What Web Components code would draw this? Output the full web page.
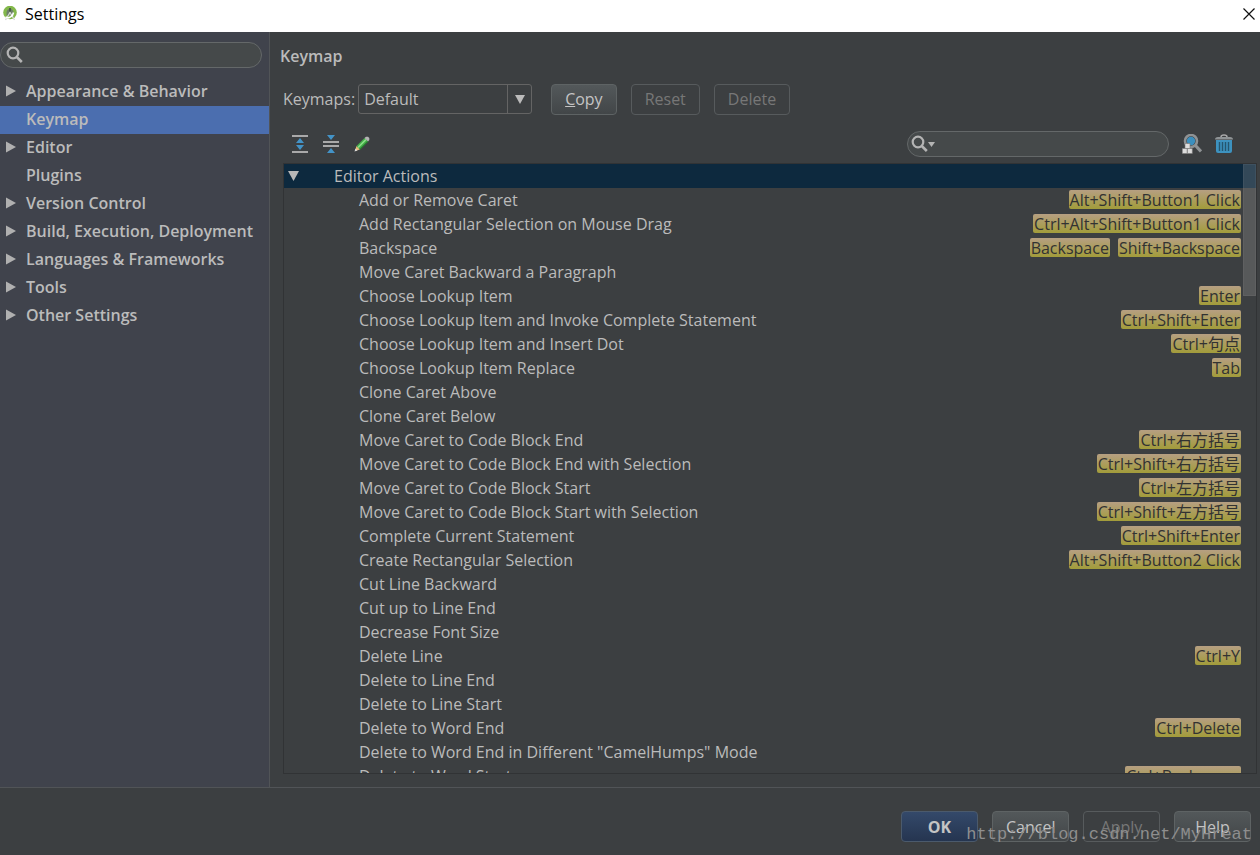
<!DOCTYPE html>
<html lang="en">
<head>
<meta charset="utf-8">
<title>Settings</title>
<style>
  html, body { margin: 0; height: 100%; }
  body { font-family: "Open Sans", "Noto Sans CJK SC", sans-serif; font-size: 16px; line-height: 24px; color: #bbbbbb; background: #3c3f41; }
</style>
</head>
<body>
<settings-window></settings-window>

<template id="tpl-window">
  <style>
    :host { display: flex; flex-direction: column; height: 100vh; overflow: hidden; }
    main { flex: 1; min-height: 0; display: flex; }
    settings-sidebar { flex: none; width: 269px; }
    keymap-page { flex: 1; min-width: 0; }
  </style>
  <title-bar>Settings</title-bar>
  <main>
    <settings-sidebar></settings-sidebar>
    <keymap-page></keymap-page>
  </main>
  <dialog-footer>http://blog.csdn.net/MyHreat</dialog-footer>
</template>

<template id="tpl-title">
  <style>
    :host { display: flex; align-items: center; height: 32px; flex: none; box-sizing: border-box; padding: 0 4px 4px 2px; background: #fff; color: #000; }
    span { flex: 1; margin-left: 7px; }
    button { border: 0; background: none; padding: 0; width: 14px; height: 14px; display: flex; }
    svg { display: block; }
  </style>
  <svg width="16" height="16" viewBox="0 0 16 16" aria-hidden="true">
    <circle cx="8" cy="6.500" r="6.800" fill="#83b84a"/>
    <path d="M4.500 7a3.500 4 0 0 1 7 0v2.500h-7z" fill="#6d8069"/>
    <path d="M8 2v4" stroke="#4b5f45" stroke-width="2"/>
    <path d="M3.500 14L8 6.500l4.500 7.500" stroke="#d5d8d5" stroke-width="1.300" fill="none"/>
    <path d="M3.500 11q3 2 5.500-.5 2-1 2.500-4" stroke="#fff" stroke-width="1.600" fill="none"/>
  </svg>
  <span><slot></slot></span>
  <button aria-label="Close"><svg width="14" height="14" viewBox="0 0 14 14"><path d="M1.500 1.500l11 11M12.500 1.500l-11 11" stroke="#111" stroke-width="1.200"/></svg></button>
</template>

<template id="tpl-search">
  <style>
    :host { display: flex; align-items: center; box-sizing: border-box; width: 262px; height: 26px; border: 1px solid #646869; border-radius: 13px; background: #45494a; padding: 0 8px 0 5px; }
    svg { flex: none; display: block; }
    .menu { display: none; }
    :host([menu]) { padding-left: 3px; }
    :host([menu]) .menu { display: block; }
    input { flex: 1; min-width: 0; border: 0; outline: 0; background: none; color: inherit; font: inherit; padding: 0 4px; height: 22px; }
  </style>
  <svg width="17" height="18" viewBox="0 0 17 18" aria-hidden="true"><circle cx="7" cy="7" r="5.300" fill="none" stroke="#b4b4b4" stroke-width="2.200"/><path d="M10.800 11l5 5" stroke="#b4b4b4" stroke-width="2.600"/></svg>
  <svg class="menu" width="7" height="5" viewBox="0 0 7 5" aria-hidden="true"><path d="M0 0h7L3.500 5z" fill="#b4b4b4"/></svg>
  <input type="text">
</template>

<template id="tpl-sidebar">
  <style>
    :host { display: block; background: #40434c; border-right: 1px solid #515457; padding-top: 10px; }
    nav { margin-top: 10px; }
  </style>
  <search-box label="Search settings"></search-box>
  <nav>
    <nav-item branch>Appearance &amp; Behavior</nav-item>
    <nav-item selected>Keymap</nav-item>
    <nav-item branch>Editor</nav-item>
    <nav-item>Plugins</nav-item>
    <nav-item branch>Version Control</nav-item>
    <nav-item branch>Build, Execution, Deployment</nav-item>
    <nav-item branch>Languages &amp; Frameworks</nav-item>
    <nav-item branch>Tools</nav-item>
    <nav-item branch>Other Settings</nav-item>
  </nav>
</template>

<template id="tpl-nav">
  <style>
    :host { display: block; }
    a { display: flex; align-items: center; box-sizing: border-box; height: 28px; padding: 0 0 2px 6px; color: #bbbbbb; text-decoration: none; font-weight: 600; white-space: nowrap; }
    :host([selected]) a { background: #4b6eaf; }
    svg { flex: none; margin-right: 10px; visibility: hidden; }
    :host([branch]) svg { visibility: visible; }
  </style>
  <a href="#"><svg width="10" height="12" viewBox="0 0 10 12" aria-hidden="true"><path d="M0 .5L10 6 0 11.500z" fill="#b0b0b0"/></svg><slot></slot></a>
</template>

<template id="tpl-button">
  <style>
    :host { display: block; flex: none; }
    button { display: block; box-sizing: border-box; width: 100%; height: 31px; padding: 0 13px; border: 1px solid #5e6364; border-radius: 4px; background: linear-gradient(#53585a, #424648); color: #c4c4c4; font: inherit; line-height: 24px; white-space: nowrap; }
    button:disabled { background: none; color: #777777; border-color: #575b5d; }
    :host([primary]) button { background: linear-gradient(#34496a, #253550); border-color: #4b5a6c; font-weight: 700; }
  </style>
  <button><slot></slot></button>
</template>

<template id="tpl-page">
  <style>
    :host { display: flex; flex-direction: column; box-sizing: border-box; padding: 12px 3px 13px 10px; }
    h1 { margin: 0; font-size: 16px; line-height: 24px; font-weight: 600; }
    .row { display: flex; align-items: center; height: 32px; margin: 15px 0 0 3px; }
    .select { position: relative; width: 174px; height: 30px; margin: 0 19px 0 3px; }
    select { appearance: none; box-sizing: border-box; width: 100%; height: 30px; border: 1px solid #646464; border-radius: 3px; background: #3c3f41; color: #bbbbbb; font: inherit; padding: 0 30px 0 5px; outline: 0; }
    .arrow { position: absolute; right: 1px; top: 1px; width: 23px; height: 28px; border-left: 1px solid #646464; display: grid; place-items: center; pointer-events: none; }
    ui-button + ui-button { margin-left: 14px; }
    .tools { display: flex; align-items: center; height: 32px; margin: 13px 24px 3px 12px; gap: 13px; }
    .tools button { border: 0; background: none; padding: 0; display: flex; }
    .tools button + button { margin-left: 2px; }
    .tools search-box { margin-left: auto; }
    .tools search-box + button + button { margin-left: 0; }
    keymap-tree { flex: 1; min-height: 0; margin-left: 3px; }
  </style>
  <h1>Keymap</h1>
  <div class="row">
    <label for="scheme">Keymaps:</label>
    <div class="select">
      <select id="scheme"><option>Default</option></select>
      <span class="arrow"><svg width="10" height="9" viewBox="0 0 10 9"><path d="M0 0h10L5 9z" fill="#bbb"/></svg></span>
    </div>
    <ui-button><u>C</u>opy</ui-button>
    <ui-button disabled>Reset</ui-button>
    <ui-button disabled>Delete</ui-button>
  </div>
  <div class="tools">
    <button aria-label="Expand all"><svg width="16" height="18" viewBox="0 0 16 18"><path d="M0 1h16M0 17h16" stroke="#a9a9a9" stroke-width="2"/><path d="M4 8l4-5 4 5zM4 10l4 5 4-5z" fill="#4393c7"/></svg></button>
    <button aria-label="Collapse all"><svg width="16" height="18" viewBox="0 0 16 18"><path d="M0 7h16M0 11h16" stroke="#a9a9a9" stroke-width="2"/><path d="M4 0h8L8 5zM4 18h8l-4-5z" fill="#4393c7"/></svg></button>
    <button aria-label="Edit shortcut"><svg width="16" height="16" viewBox="0 0 16 16"><path d="M1 15l1.500-5 3.500 3.500z" fill="#e8bd7a"/><path d="M.5 15.500l1-3 2 2z" fill="#ddd"/><path d="M2.500 10l8-8 3.500 3.500-8 8z" fill="#46ad4b"/><path d="M3.500 11l8-8 1 1-8 8z" fill="#8ee28b"/><path d="M5.500 13l8-8 .8.800-8.300 8z" fill="#247d2c"/><path d="M10.500 2L12 .7h2L15.300 2v2L14 5.500z" fill="#b4b4b4"/></svg></button>
    <search-box menu label="Search actions"></search-box>
    <button aria-label="Find action by shortcut"><svg width="20" height="20" viewBox="0 0 20 20"><circle cx="9" cy="7" r="6" fill="none" stroke="#8f9294" stroke-width="2.600"/><circle cx="9" cy="7" r="4.200" fill="#3b8fbe"/><path d="M13 11l6 6.500" stroke="#8f9294" stroke-width="3.200"/><path d="M3 9.500h5v5H3z" fill="#dcdcdc" stroke="#777" stroke-width=".6"/><path d="M.3 14.500h5v5h-5zM5.300 14.500h5v5h-5z" fill="#dcdcdc" stroke="#777" stroke-width=".6"/></svg></button>
    <button aria-label="Clear"><svg width="18" height="20" viewBox="0 0 18 20"><path d="M6 3q0-2 3-2t3 2" fill="none" stroke="#a9a9a9" stroke-width="1.500"/><path d="M0 5.500q0-2.500 3-2.500h12q3 0 3 2.500z" fill="#8f9496"/><path d="M1 6h16v11q0 2-2 2H3q-2 0-2-2z" fill="#3d92bf"/><path d="M4.500 8v9M7.500 8v9M10.500 8v9M13.500 8v9" stroke="#25566f" stroke-width="1.400"/></svg></button>
  </div>
  <keymap-tree></keymap-tree>
</template>

<template id="tpl-tree">
  <style>
    :host { display: block; position: relative; border: 1px solid #313335; }
    .view { height: 100%; overflow: auto; scrollbar-width: none; }
    table { width: 100%; border-collapse: collapse; }
    tr { height: 24px; }
    th, td { padding: 0; height: 24px; line-height: 24px; font-weight: 400; text-align: left; white-space: nowrap; }
    tbody th { padding-left: 75px; }
    thead th { background: #0d293e; }
    thead div { display: flex; align-items: center; gap: 35px; padding-left: 4px; }
    td { padding-right: 15px; }
    td div { display: flex; justify-content: flex-end; gap: 8px; box-sizing: border-box; height: 24px; padding-top: 2px; align-items: flex-start; }
    kbd { font: inherit; line-height: 20px; height: 19px; padding: 0 1px; border-radius: 2px; color: #323232; background: linear-gradient(#b69f82, #a29c3a); }
    .thumb { position: absolute; top: 0; right: 0; box-sizing: border-box; width: 13px; height: 132px; background: rgba(166,166,166,.25); border: 1px solid rgba(166,166,166,.1); }
  </style>
  <div class="view"><table>
    <thead><tr><th colspan="2" scope="colgroup"><div><svg width="11" height="10" viewBox="0 0 11 10" aria-hidden="true"><path d="M0 0h11L5.500 10z" fill="#b8b8b8"/></svg>Editor Actions</div></th></tr></thead>
    <tbody></tbody>
  </table></div>
  <div class="thumb"></div>
</template>

<template id="tpl-footer">
  <style>
    :host { display: flex; flex: none; position: relative; justify-content: flex-end; gap: 14px; height: 67px; box-sizing: content-box; border-top: 1px solid #515457; padding-right: 9px; }
    ui-button { width: 77px; margin-top: 23px; }
    .mark { position: absolute; right: 8px; bottom: 8px; font: 17px/24px "Liberation Mono", monospace; color: #8e8e8e; pointer-events: none; }
  </style>
  <ui-button primary>OK</ui-button>
  <ui-button>Cancel</ui-button>
  <ui-button disabled>Apply</ui-button>
  <ui-button>Help</ui-button>
  <span class="mark"><slot></slot></span>
</template>

<script>
  class BaseElement extends HTMLElement {
    constructor() {
      super();
      this.attachShadow({ mode: 'open' });
      const tpl = document.getElementById(this.constructor.template);
      this.shadowRoot.append(tpl.content.cloneNode(true));
    }
  }
  class TitleBar extends BaseElement { static template = 'tpl-title'; }
  class NavItem extends BaseElement { static template = 'tpl-nav'; }
  class SearchBox extends BaseElement {
    static template = 'tpl-search';
    connectedCallback() {
      this.shadowRoot.querySelector('input').setAttribute('aria-label', this.getAttribute('label') || 'Search');
    }
  }
  class UiButton extends BaseElement {
    static template = 'tpl-button';
    connectedCallback() {
      this.shadowRoot.querySelector('button').disabled = this.hasAttribute('disabled');
    }
  }
  const ACTIONS = [
    ['Add or Remove Caret', 'Alt+Shift+Button1 Click'],
    ['Add Rectangular Selection on Mouse Drag', 'Ctrl+Alt+Shift+Button1 Click'],
    ['Backspace', 'Backspace', 'Shift+Backspace'],
    ['Move Caret Backward a Paragraph'],
    ['Choose Lookup Item', 'Enter'],
    ['Choose Lookup Item and Invoke Complete Statement', 'Ctrl+Shift+Enter'],
    ['Choose Lookup Item and Insert Dot', 'Ctrl+句点'],
    ['Choose Lookup Item Replace', 'Tab'],
    ['Clone Caret Above'],
    ['Clone Caret Below'],
    ['Move Caret to Code Block End', 'Ctrl+右方括号'],
    ['Move Caret to Code Block End with Selection', 'Ctrl+Shift+右方括号'],
    ['Move Caret to Code Block Start', 'Ctrl+左方括号'],
    ['Move Caret to Code Block Start with Selection', 'Ctrl+Shift+左方括号'],
    ['Complete Current Statement', 'Ctrl+Shift+Enter'],
    ['Create Rectangular Selection', 'Alt+Shift+Button2 Click'],
    ['Cut Line Backward'],
    ['Cut up to Line End'],
    ['Decrease Font Size'],
    ['Delete Line', 'Ctrl+Y'],
    ['Delete to Line End'],
    ['Delete to Line Start'],
    ['Delete to Word End', 'Ctrl+Delete'],
    ['Delete to Word End in Different "CamelHumps" Mode'],
    ['Delete to Word Start', 'Ctrl+Backspace']
  ];
  class KeymapTree extends BaseElement {
    static template = 'tpl-tree';
    connectedCallback() {
      const body = this.shadowRoot.querySelector('tbody');
      body.replaceChildren(...ACTIONS.map(([name, ...keys]) => {
        const row = document.createElement('tr');
        const head = document.createElement('th');
        head.scope = 'row';
        head.textContent = name;
        const cell = document.createElement('td');
        const list = document.createElement('div');
        for (const key of keys) {
          const kbd = document.createElement('kbd');
          kbd.textContent = key;
          list.append(kbd);
        }
        cell.append(list);
        row.append(head, cell);
        return row;
      }));
    }
  }
  class SettingsSidebar extends BaseElement { static template = 'tpl-sidebar'; }
  class KeymapPage extends BaseElement { static template = 'tpl-page'; }
  class DialogFooter extends BaseElement { static template = 'tpl-footer'; }
  class SettingsWindow extends BaseElement { static template = 'tpl-window'; }

  customElements.define('title-bar', TitleBar);
  customElements.define('nav-item', NavItem);
  customElements.define('search-box', SearchBox);
  customElements.define('ui-button', UiButton);
  customElements.define('keymap-tree', KeymapTree);
  customElements.define('settings-sidebar', SettingsSidebar);
  customElements.define('keymap-page', KeymapPage);
  customElements.define('dialog-footer', DialogFooter);
  customElements.define('settings-window', SettingsWindow);
</script>
</body>
</html>
